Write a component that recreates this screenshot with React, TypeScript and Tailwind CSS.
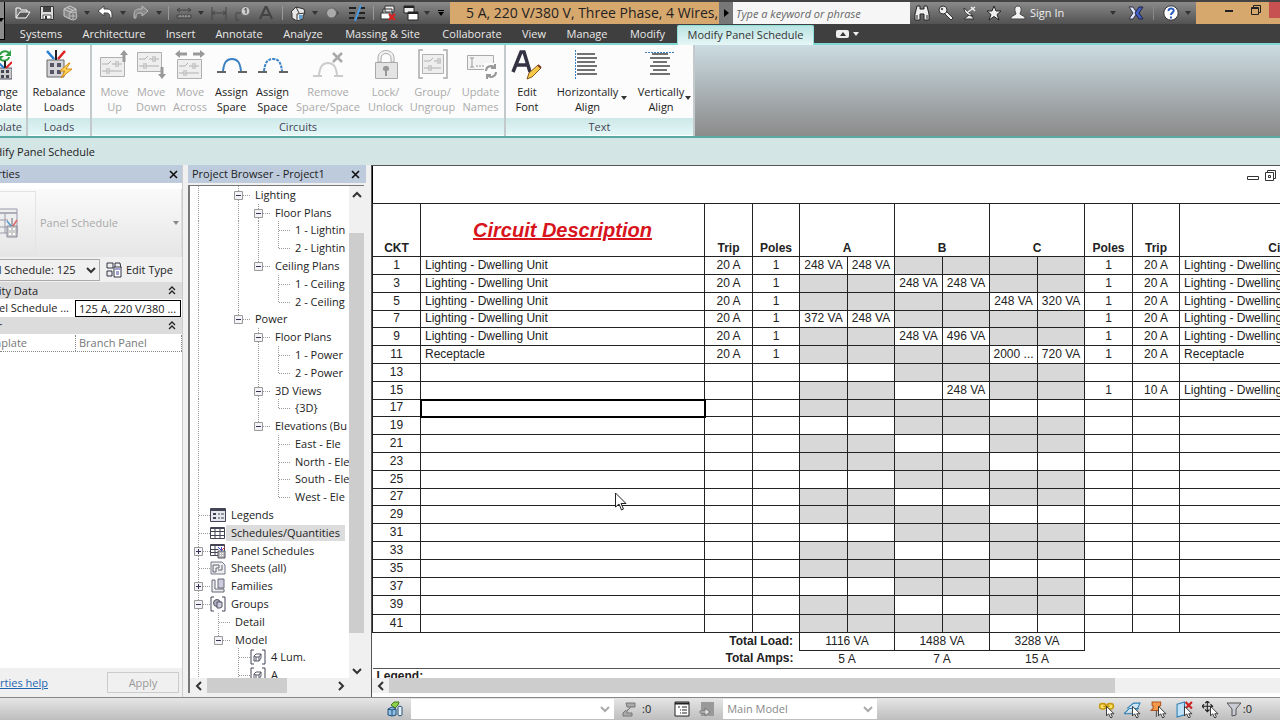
import React from 'react';
import clsx from 'clsx';

type IconProps = { name: string; size?: number };

const small: Record<string, React.ReactNode> = {
  open: (
    <>
      <path d="M1 13V3h4l1 2h6v2" fill="#777" stroke="#fff" />
      <path d="M1 13L5 7h10l-4 6z" fill="#555" stroke="#fff" />
    </>
  ),
  save: (
    <>
      <path d="M1.500 1.500h13v13h-13z" fill="#ddd" stroke="#333" />
      <path d="M4 2h8v5H4z" fill="#444" />
      <path d="M4 10h8v4H4z" fill="#fff" stroke="#555" />
      <path d="M6 11h2v3H6z" fill="#333" />
    </>
  ),
  cube: (
    <>
      <path d="M8 1l6 3v7l-6 3-6-3V4z" fill="#888" stroke="#ccc" />
      <path d="M2 4l6 3 6-3M8 7v7M5 2.500l6 3" fill="none" stroke="#ccc" />
      <circle cx="11" cy="11" r="4" fill="#777" stroke="#bbb" />
      <path d="M11 8v6M8 11h6" stroke="#bbb" />
    </>
  ),
  undo: <path d="M1 6l6-5v3h3c4 0 5 3 5 6v3h-2c0-4-1-5-4-5H7v3z" fill="#fff" stroke="#444" />,
  redo: <path d="M15 6L9 1v3H6C2 4 1 7 1 10v3h2c0-4 1-5 4-5h2v3z" fill="#888" stroke="#bbb" />,
  measure: (
    <>
      <path d="M1 5h14M4 3L1 5l3 2M12 3l3 2-3 2" fill="none" stroke="#444" />
      <path d="M1 10h14v3H1z" fill="#777" stroke="#444" />
      <path d="M4 10v2M7 10v2M10 10v2M13 10v2" stroke="#aaa" />
    </>
  ),
  dimension: <path d="M1 2v13M15 2v13M1 8h14M4 6L1 8l3 2M12 6l3 2-3 2" fill="none" stroke="#444" />,
  tag: (
    <>
      <path d="M1 15V8h5M1 15h3" fill="none" stroke="#444" />
      <circle cx="10.500" cy="6" r="4.500" fill="#ccc" stroke="#666" />
      <path d="M9.500 4.500L11 3.500v5" fill="none" stroke="#333" />
    </>
  ),
  textA: <path d="M2 14L7.500 2h1L14 14M4.500 10h7" fill="none" stroke="#444" strokeWidth="2.200" />,
  house: (
    <>
      <path d="M1 7l5-5 8 2 1 5-2 1v4l-6 2-5-3V8z" fill="#e8e8e8" stroke="#333" />
      <path d="M1 7l5-5 3 6M7 16V9l8-1" fill="none" stroke="#333" />
      <path d="M9 10h3v4H9z" fill="#5aa0d8" />
    </>
  ),
  section: (
    <>
      <path d="M10 3l5 5-5 5z" fill="#444" />
      <circle cx="7.500" cy="8" r="5" fill="#aaa" stroke="#666" />
    </>
  ),
  thin: (
    <>
      <path d="M0 3h7M10 3h6M0 8h6M9 8h7M0 13h5M8 13h8" stroke="#222" strokeWidth="2" />
      <path d="M12 0L6 16" stroke="#4c9be0" strokeWidth="2" />
    </>
  ),
  closeHidden: (
    <>
      <path d="M5 1h9v6H5zM3 4h9v6H3z" fill="#eee" stroke="#333" />
      <path d="M1 8h9v6H1z" fill="#fff" stroke="#333" />
      <path d="M9 9l6 6M15 9l-6 6" stroke="#d22" strokeWidth="2.200" />
    </>
  ),
  switchWin: (
    <>
      <path d="M1 1h10v7H1z" fill="#eee" stroke="#222" />
      <path d="M5 7h10v8H5z" fill="#fff" stroke="#222" />
      <path d="M5 8h10M1 2h10" stroke="#222" strokeWidth="2" />
    </>
  ),
  binoculars: (
    <path d="M3 1h3v3h4V1h3l2 8v6h-5V9H6v6H1V9zM3 10v4M13 10v4" fill="#eee" stroke="#222" />
  ),
  key: (
    <>
      <path d="M8 6l7 7-2 2-7-7z" fill="#f0f0f0" stroke="#333" />
      <circle cx="5" cy="5" r="4" fill="#f0f0f0" stroke="#333" />
      <circle cx="4" cy="4" r="1.200" fill="#555" />
    </>
  ),
  dish: (
    <>
      <path d="M2 3c0 5 4 8 9 8zM7 10l-5 4h10l-3-4" fill="#eee" stroke="#333" />
      <path d="M6 7l7-5M9 2l4 4" stroke="#eee" strokeWidth="1.400" />
    </>
  ),
  star: <path d="M8 1l2 5h5l-4 3.500 2 5.500-5-3.500L3 15l2-5.500L1 6h5z" fill="#eee" stroke="#222" />,
  user: (
    <path d="M8 1c3 0 3.500 3 3 5-.4 1.600-1 2-1 3l5 3v2H1v-2l5-3c0-1-.6-1.400-1-3-.5-2 0-5 3-5z" fill="#f2f2f2" stroke="#444" />
  ),
  exchange: (
    <>
      <path d="M1 2h4l4 6-4 6H1l4-6z" fill="#dfe6ff" stroke="#334" />
      <path d="M15 2h-4L7 8l4 6h4l-4-6z" fill="#3f5fc8" stroke="#224" />
    </>
  ),
  help: (
    <>
      <circle cx="8" cy="8" r="7.200" fill="#fff" stroke="#333" />
      <path d="M5.500 6c0-3.500 5.300-3.200 5.200-.2C10.600 7.800 8 7.600 8 10M8 11.500v2" fill="none" stroke="#2a5bb8" strokeWidth="2" />
    </>
  ),
  legend: (
    <>
      <path d="M.5 1.500h15v13H.5z" fill="#e6e8ef" stroke="#445" />
      <path d="M.5 3h15" stroke="#445" strokeWidth="2" />
      <path d="M3 6h3v2H3zM3 10h3v2H3z" fill="#445" />
      <path d="M8 7h2M11 7h3M8 11h2M11 11h3" stroke="#445" />
    </>
  ),
  grid: (
    <>
      <path d="M.5 2.500h14v11H.5z" fill="#fff" stroke="#445" />
      <path d="M.5 3.500h14M.5 6.500h14M.5 10.500h14M5 3v10M10 3v10" stroke="#445" />
    </>
  ),
  panelGrid: (
    <>
      <path d="M.5 1.500h14v11H.5z" fill="#fff" stroke="#445" />
      <path d="M.5 2.500h14M.5 6.500h8M.5 9.500h8M5 3v9" stroke="#445" />
      <path d="M8 8h7v7H8z" fill="#bbb" stroke="#556" />
      <path d="M11.500 8V4M11 7L8 4" stroke="#44c" />
      <path d="M12 7l3-3" stroke="#d33" />
      <path d="M10 10h1v1h-1zM12 10h1v1h-1zM10 12h1v1h-1zM12 12h1v1h-1z" fill="#fff" />
    </>
  ),
  sheet: (
    <>
      <path d="M1 2h11l3 3v9H1z" fill="#eee" stroke="#778" />
      <path d="M3 5h6v3H6v4H3zM8 10h4V5" fill="none" stroke="#667" />
    </>
  ),
  family: (
    <>
      <path d="M8 1h6v9H8z" fill="#ccd" stroke="#667" />
      <path d="M2 2h3v9h9v3H2z" fill="#eee" stroke="#667" />
    </>
  ),
  group: (
    <>
      <path d="M4 1H1v14h3M12 1h3v14h-3" fill="none" stroke="#445" />
      <circle cx="7" cy="7" r="3.500" fill="#aab" stroke="#556" />
      <path d="M7 6h5v5l-2 1H7z" fill="#ccd" stroke="#556" />
    </>
  ),
  model: (
    <>
      <path d="M4 1H1v14h3M12 1h3v14h-3" fill="none" stroke="#445" />
      <path d="M4 7l2-2h5v4l-2 3H6V8zM4 7v5h2M6 8h3v4M9 8l2-3" fill="none" stroke="#556" />
    </>
  ),
  typeEdit: (
    <>
      <path d="M1 1h6v5H1zM9 1h5l1 5H9zM1 9h5v5H1z" fill="#eee" stroke="#334" />
      <path d="M8 5h7v10H8z" fill="#fff" stroke="#334" />
      <path d="M9 7h5M10 10h3M10 12h3" stroke="#44a" />
    </>
  ),
  workset: (
    <>
      <path d="M4 4l3-3h5l-1 3-3 3z" fill="#8ed04a" stroke="#3c7a1c" />
      <path d="M1 8l4-2 4 2v6l-4 1-4-1z" fill="#8fc1e8" stroke="#24507a" />
      <path d="M1 8l4 1 4-1M5 9v6" fill="none" stroke="#24507a" />
      <path d="M11 6c0-1 4-1 4 0v8c0 1-4 1-4 0z" fill="#e8f0f8" stroke="#24507a" />
    </>
  ),
  editing: <path d="M4 2h9v4H5zM9 6l-4 4v2h5v3H1v-3l3-3" fill="#aaa" stroke="#777" />,
  options: (
    <>
      <path d="M1 1h14v14H1z" fill="#fff" stroke="#222" />
      <path d="M1 2.500h14" stroke="#222" strokeWidth="2" />
      <path d="M4 6h2M8 6h5M6 9h1M8 9h5M6 12h1M8 12h5" stroke="#222" />
    </>
  ),
  activate: (
    <>
      <path d="M2 1h13v14H2z" fill="#999" />
      <path d="M1 10h5V7l5 4-5 4v-3H1z" fill="#ddd" stroke="#777" />
    </>
  ),
  selLinks: (
    <path
      d="M4 2.500h1a2.500 2.500 0 010 5H4a2.500 2.500 0 010-5zM11 2.500h1a2.500 2.500 0 010 5h-1a2.500 2.500 0 010-5zM5 5h6"
      fill="#ffe36a"
      stroke="#c79a10"
      strokeWidth="1.500"
    />
  ),
  selUnder: <path d="M0 12h9M0 12l5-5h9M3 7l6-5h6l-4 9" fill="#cfe6f5" stroke="#2d7fb5" />,
  selPin: (
    <>
      <path d="M2 1h8v3L9 5v2l2 2H1l2-2V5L2 4z" fill="#f39a4a" stroke="#b3541a" />
      <path d="M6 9v6" stroke="#555" />
    </>
  ),
  selFace: (
    <>
      <path d="M1 3l7-2v12l-7 2z" fill="#bfe0f5" stroke="#2d7fb5" />
      <path d="M9 1l6 6M15 1L9 7" stroke="#c22" strokeWidth="2" />
    </>
  ),
  drag: <path d="M5 0v10M0 5h10M3 2l2-2 2 2M3 8l2 2 2-2M2 3L0 5l2 2M8 3l2 2-2 2" fill="none" stroke="#222" />,
  filter: <path d="M1 2h14L10 8v6l-4 1V8z" fill="#c9ccd2" stroke="#555" />,
};

const Icon: React.FC<IconProps> = ({ name, size = 16 }) => (
  <svg width={size} height={size} viewBox="0 0 16 16" className="shrink-0" aria-hidden="true">
    {small[name]}
    {(name.startsWith('sel') || name === 'drag') && (
      <path d="M8 5v9l2-2 2 4 1.500-1-1.500-3h3z" fill="#fff" stroke="#222" strokeWidth=".8" />
    )}
  </svg>
);

const Caret = ({ className = 'fill-[#333]' }: { className?: string }) => (
  <svg width="6" height="4" viewBox="0 0 6 4" className={clsx('shrink-0', className)} aria-hidden="true">
    <path d="M0 0h6L3 4z" />
  </svg>
);

type ChevronProps = { dir: 'up' | 'down' | 'left' | 'right'; className?: string };

const Chevron = ({ dir, className = 'stroke-[#333]' }: ChevronProps) => {
  const d = { up: 'M1 7l4-4 4 4', down: 'M1 3l4 4 4-4', left: 'M7 1L3 5l4 4', right: 'M3 1l4 4-4 4' }[dir];
  return (
    <svg
      width="10"
      height="10"
      viewBox="0 0 10 10"
      fill="none"
      strokeWidth="2"
      className={clsx('pointer-events-none shrink-0', className)}
      aria-hidden="true"
    >
      <path d={d} />
    </svg>
  );
};

const CloseX = () => (
  <svg width="9" height="9" viewBox="0 0 9 9" stroke="#111" strokeWidth="1.600" aria-hidden="true">
    <path d="M1 1l7 7M8 1L1 8" />
  </svg>
);

const quickAccess: [string, string][] = [
  ['open', 'w-6'],
  ['save', 'w-[23px]'],
  ['cube', 'w-6'],
  ['caret', 'w-2.5'],
  ['undo', 'w-[26px]'],
  ['caret', 'w-2.5'],
  ['redo', 'w-[26px]'],
  ['caret', 'w-2.5'],
  ['sep', 'w-2'],
  ['measure', 'w-6'],
  ['caret', 'w-2.5'],
  ['dimension', 'w-[26px]'],
  ['tag', 'w-[22px]'],
  ['textA', 'w-6'],
  ['sep', 'w-2'],
  ['house', 'w-6'],
  ['caret', 'w-2.5'],
  ['section', 'w-6'],
  ['thin', 'w-[26px]'],
  ['sep', 'w-1.5'],
  ['closeHidden', 'w-6'],
  ['switchWin', 'w-[22px]'],
  ['caret', 'w-2.5'],
];

const TitleBar = () => (
  <header className="flex h-6 shrink-0 items-stretch border-t-2 border-[#444] bg-linear-to-b from-[#8a8a8a] to-[#525252]">
    <button aria-label="Application menu" className="mr-1.5 flex w-[5px] items-end justify-end overflow-hidden border-r border-black bg-[#8c8c8c] pb-0.5">
      <Caret className="fill-black" />
    </button>
    {quickAccess.map(([name, width], i) =>
      name === 'sep' ? (
        <span key={i} className={clsx(width, 'flex shrink-0 justify-center py-1')}>
          <span className="w-px bg-[#999]" />
        </span>
      ) : (
        <button key={i} aria-label={name} className={clsx(width, 'flex shrink-0 items-center justify-center')}>
          {name === 'caret' ? <Caret /> : <Icon name={name} />}
        </button>
      )
    )}
    <button aria-label="Customize" className="flex w-[18px] shrink-0 flex-col items-center justify-center gap-px">
      <span className="h-px w-1.5 bg-black" />
      <Caret className="fill-black" />
    </button>
    <h1 className="w-[269px] shrink-0 bg-[#d7a86e] pl-4 text-sm leading-[22px] whitespace-nowrap text-[#222]">
      5 A, 220 V/380 V, Three Phase, 4 Wires,
    </h1>
    <button aria-label="Expand" className="flex w-3.5 shrink-0 items-center justify-center bg-[#777]">
      <svg width="5" height="8" viewBox="0 0 5 8" aria-hidden="true">
        <path d="M0 0l5 4-5 4z" />
      </svg>
    </button>
    <input
      aria-label="Search"
      placeholder="Type a keyword or phrase"
      className="w-[177px] shrink-0 bg-[#f6f6f6] px-[3px] pt-0.5 italic placeholder:text-[#666]"
    />
    <div className="flex shrink-0 items-center">
      {['binoculars', 'key', 'dish', 'star'].map((n) => (
        <button key={n} aria-label={n} className="flex w-6 justify-center">
          <Icon name={n} />
        </button>
      ))}
      <button className="flex items-center gap-1 pl-1 text-[#eee]">
        <Icon name="user" />
        Sign In
      </button>
    </div>
    <div className="flex min-w-0 flex-1 items-center justify-end">
      <button aria-label="Account menu" className="mr-2 p-1"><Caret /></button>
      <button aria-label="Exchange apps"><Icon name="exchange" /></button>
      <span className="mx-[9px] h-3.5 w-px bg-[#888]" />
      <button aria-label="Help"><Icon name="help" /></button>
      <button aria-label="Help menu" className="p-1.5 pr-[5px]"><Caret /></button>
    </div>
    <div className="flex w-[84px] shrink-0 items-start bg-[#d7a86e]">
      <button aria-label="Minimize" className="ml-5 flex h-[18px] w-[26px] items-center justify-center">
        <span className="h-0.5 w-2 bg-[#222]" />
      </button>
      <button aria-label="Restore" className="flex h-4 w-[27px] items-center justify-center">
        <svg width="10" height="10" viewBox="0 0 10 10" fill="none" stroke="#222" aria-hidden="true">
          <path d="M.5 2.500h7v7h-7zM2.500 2V.5h7v7H8M.5 3.500h7" />
        </svg>
      </button>
      <button aria-label="Close" className="h-4 flex-1 bg-[#c75050]" />
    </div>
  </header>
);

const tabs: [string, string][] = [
  ['Systems', 'w-[62px]'],
  ['Architecture', 'w-[84px]'],
  ['Insert', 'w-[49px]'],
  ['Annotate', 'w-[68px]'],
  ['Analyze', 'w-[60px]'],
  ['Massing & Site', 'w-[99px]'],
  ['Collaborate', 'w-[80px]'],
  ['View', 'w-[44px]'],
  ['Manage', 'w-[62px]'],
  ['Modify', 'w-[59px]'],
];

const RibbonTabs = () => (
  <nav className="flex h-[21px] shrink-0 items-end border-b-2 border-[#7fd6d3] bg-[#3f3f3f] whitespace-nowrap">
    <span className="mr-[5px] h-4 w-[5px] shrink-0 self-start border-r border-b border-black bg-[#8c8c8c]" />
    {tabs.map(([label, width]) => (
      <button key={label} className={clsx(width, 'h-[19px] shrink-0 text-[#e8e8e8]')}>
        {label}
      </button>
    ))}
    <button className="-mb-0.5 h-5 w-[137px] shrink-0 rounded-t-xs border-x border-t border-[#8fe0dc] bg-linear-to-b from-[#b9e4e2] to-[#e6f6f6] pb-0.5 text-[#333]">
      Modify Panel Schedule
    </button>
    <button aria-label="Minimize ribbon" className="ml-[22px] flex h-[19px] items-center gap-1">
      <span className="flex h-2 w-[13px] items-center justify-center rounded-xs bg-[#eee]">
        <Caret className="rotate-180 fill-[#333]" />
      </span>
      <Caret className="fill-[#eee]" />
    </button>
  </nav>
);

const Circuitry = ({ x = 0, y = 0, w = 25 }: { x?: number; y?: number; w?: number }) => (
  <g transform={`translate(${x} ${y})`} fill="#eee" stroke="#b0b0b0">
    <path d={`M.5.5h${w}v19h-${w}z`} />
    <path d={`M2 7h6l3-3M12 7h4M16 4v6M18 4v6M18 7h${w - 20}M2 14h5M7 11v6M9 11v6M9 14h${w - 11}`} fill="none" />
  </g>
);

const arrowUp = 'M4 0l4 5H5.500v7h-3V5H0z';

const big: Record<string, React.ReactNode> = {
  rebalance: (
    <>
      <path d="M4 11h17v17H4z" fill="#d4d4d8" stroke="#666" />
      <path d="M7 14h4v4H7zM14 14h4v4h-4zM7 21h4v4H7zM14 21h4v4h-4z" fill="#556" />
      <path d="M4 2l7 8" stroke="#2a7fd0" strokeWidth="2.500" />
      <path d="M13 1v10" stroke="#222" strokeWidth="2" />
      <path d="M22 2l-7 8" stroke="#d22" strokeWidth="2.500" />
      <path d="M26 14l-9 8h5l-4 7 11-9h-6l4-6z" fill="#ffd75a" stroke="#d88a10" />
    </>
  ),
  change: (
    <>
      <path d="M10 6a5 4 0 019-2M19 8a5 4 0 01-9 2" fill="none" stroke="#2f9e44" strokeWidth="2" />
      <path d="M21 1v6h-6zM8 13V7h6z" fill="#2f9e44" />
      <path d="M8 19h14v11H8z" fill="#ccc" stroke="#556" />
      <path d="M11 21h3v3h-3zM16 21h3v3h-3zM11 26h3v3h-3zM16 26h3v3h-3z" fill="#445" />
      <path d="M8 13l6 6" stroke="#2a7fd0" strokeWidth="2" />
      <path d="M15 12v7" stroke="#222" strokeWidth="2" />
      <path d="M22 13l-6 6" stroke="#d22" strokeWidth="2" />
    </>
  ),
  moveUp: (
    <>
      <Circuitry x={1} y={8} w={24} />
      <path d={arrowUp} transform="translate(21 1)" fill="#999" />
    </>
  ),
  moveDown: (
    <>
      <Circuitry x={2} y={3} w={24} />
      <path d={arrowUp} transform="translate(31 30) rotate(180)" fill="#999" />
    </>
  ),
  moveAcross: (
    <>
      <Circuitry x={3} y={10} w={24} />
      <path d={arrowUp} transform="translate(1 9) rotate(-90)" fill="#999" />
      <path d={arrowUp} transform="translate(31 1) rotate(90)" fill="#999" />
    </>
  ),
  spare: (
    <>
      <path d="M1 23h9M22 23h9" stroke="#333" strokeWidth="1.500" />
      <path d="M7 22c1-8 3-12 9-12s8 4 9 12" fill="none" stroke="#3b82c4" strokeWidth="2" />
    </>
  ),
  space: (
    <>
      <path d="M1 23h9M22 23h9" stroke="#333" strokeWidth="1.500" />
      <path d="M7 22c1-8 3-12 9-12s8 4 9 12" fill="none" stroke="#3b82c4" strokeWidth="2" strokeDasharray="3 1" />
    </>
  ),
  remove: (
    <>
      <path d="M1 27h9M22 27h9" stroke="#bbb" strokeWidth="1.500" />
      <path d="M7 26c1-8 3-12 9-12s8 4 9 12" fill="none" stroke="#ccc" strokeWidth="2" />
      <path d="M21 4l9 9M30 4l-9 9" stroke="#aaa" strokeWidth="2.500" />
    </>
  ),
  lock: (
    <>
      <path d="M8 13V9c0-10 16-10 16 0v4h-3V9c0-6-10-6-10 0v4z" fill="#f2f2f2" stroke="#aaa" />
      <path d="M5.500 13.500h22v16h-22z" fill="#e4e4e4" stroke="#aaa" />
      <path d="M16 17a2.500 2.500 0 011 5v5h-2v-5a2.500 2.500 0 011-5z" fill="#999" />
    </>
  ),
  group: (
    <>
      <path d="M6 1H2v28h4M26 1h4v28h-4" fill="none" stroke="#aaa" strokeWidth="1.500" />
      <Circuitry x={5} y={5} w={21} />
    </>
  ),
  update: (
    <>
      <path d="M2.500 6.500h26v14h-26z" fill="#f4f4f4" stroke="#aaa" />
      <path d="M5 9h4M7 9v9M5 18h4M11 17h2M14 17h2M17 17h2" stroke="#999" />
      <path d="M19 14h13v15H19z" fill="#fcfcfc" />
      <path d="M21 22a5 5 0 019-3M31 23a5 5 0 01-9 3M30 15v4h-4M22 30v-4h4" fill="none" stroke="#999" strokeWidth="2" />
    </>
  ),
  font: (
    <>
      <path d="M2 23L10 3h3l6 20M5 16h11" fill="none" stroke="#334" strokeWidth="3.500" />
      <path d="M16 30l2-6 9-8 3 3-9 9z" fill="#f7c948" stroke="#8a5a20" />
      <path d="M27 16l3 3" stroke="#7a3b20" strokeWidth="2" />
    </>
  ),
  horizontal: (
    <>
      <path d="M3.500 1v29" stroke="#3b82c4" strokeDasharray="2 1" />
      <path d="M5 5h18M5 9h20M5 13h18M5 17h20M5 21h18M5 25h20" stroke="#444" strokeWidth="1.500" />
    </>
  ),
  vertical: (
    <>
      <path d="M0 3.500h30" stroke="#3b82c4" strokeDasharray="2 1" />
      <path d="M7 5h16M5 9h20M8 13h14M5 17h20M8 21h14M5 25h20" stroke="#444" strokeWidth="1.500" />
    </>
  ),
};

type RibbonButtonProps = { icon: string; lines: [string, string]; width: string; disabled?: boolean; menu?: boolean };

const RibbonButton: React.FC<RibbonButtonProps> = ({ icon, lines, width, disabled, menu }) => (
  <button
    disabled={disabled}
    className={clsx(width, 'relative flex shrink-0 flex-col items-center pt-1 whitespace-nowrap', disabled ? 'text-[#aaa]' : 'text-[#222]')}
  >
    <svg width="32" height="32" viewBox="0 0 32 32" fill="none" className="mb-[3px] shrink-0" aria-hidden="true">
      {big[icon]}
    </svg>
    <span>{lines[0]}</span>
    <span>{lines[1]}</span>
    {menu && (
      <span className="absolute right-0.5 bottom-[18px]">
        <Caret />
      </span>
    )}
  </button>
);

const RibbonPanel = ({ title, className, children }: { title: string; className?: string; children: React.ReactNode }) => (
  <section className={clsx('flex shrink-0 flex-col border-r-2 border-[#c4c9cc] bg-[#fcfcfc]', className)}>
    <div className="flex flex-1 leading-[15px]">{children}</div>
    <h2 className="h-[18px] border-b border-white bg-linear-to-b from-[#cde8e8] to-[#e4f7f7] text-center leading-[17px] text-[#445]">
      {title}
    </h2>
  </section>
);

const Ribbon = () => (
  <div className="flex h-[93px] shrink-0 border-b-2 border-[#5aa9a2] bg-linear-to-b from-[#cbdce2] to-[#8b8b8b]">
    <section className="flex w-7 shrink-0 flex-col items-end overflow-hidden border-r-2 border-[#c4c9cc] bg-[#fcfcfc]">
      <div className="flex flex-1 justify-end leading-[15px]">
        <button className="flex flex-col items-end pt-1 pr-1 text-[#222]">
          <svg width="24" height="32" viewBox="-2 0 24 32" fill="none" className="mr-2.5 mb-[3px] shrink-0" aria-hidden="true">
            {big.change}
          </svg>
          <span className="mr-1">Change</span>
          <span>Template</span>
        </button>
      </div>
      <h2 className="h-[18px] bg-[#dcf0f0] pr-1 leading-[17px] text-[#445]">Template</h2>
    </section>
    <RibbonPanel title="Loads" className="w-16">
      <RibbonButton icon="rebalance" lines={['Rebalance', 'Loads']} width="w-full" />
    </RibbonPanel>
    <RibbonPanel title="Circuits" className="w-[414px] [&>div]:pl-[5px]">
      <RibbonButton icon="moveUp" lines={['Move', 'Up']} width="w-[35px]" disabled />
      <RibbonButton icon="moveDown" lines={['Move', 'Down']} width="w-[38px]" disabled />
      <RibbonButton icon="moveAcross" lines={['Move', 'Across']} width="w-10" disabled />
      <RibbonButton icon="spare" lines={['Assign', 'Spare']} width="w-[43px]" />
      <RibbonButton icon="space" lines={['Assign', 'Space']} width="w-[39px]" />
      <RibbonButton icon="remove" lines={['Remove', 'Spare/Space']} width="w-[72px]" disabled />
      <RibbonButton icon="lock" lines={['Lock/', 'Unlock']} width="w-[43px]" disabled />
      <RibbonButton icon="group" lines={['Group/', 'Ungroup']} width="w-[51px]" disabled />
      <RibbonButton icon="update" lines={['Update', 'Names']} width="w-[45px]" disabled />
    </RibbonPanel>
    <RibbonPanel title="Text" className="w-[189px] [&>div]:pl-0.5">
      <RibbonButton icon="font" lines={['Edit', 'Font']} width="w-[38px]" />
      <RibbonButton icon="horizontal" lines={['Horizontally', 'Align']} width="w-[83px]" menu />
      <RibbonButton icon="vertical" lines={['Vertically', 'Align']} width="w-16" menu />
    </RibbonPanel>
  </div>
);

const DoubleUp = () => (
  <svg width="8" height="9" viewBox="0 0 8 9" fill="none" stroke="#222" strokeWidth="1.300" aria-hidden="true">
    <path d="M1 4l3-3 3 3M1 8l3-3 3 3" />
  </svg>
);

const PaneHeader = ({ children, className }: { children: React.ReactNode; className?: string }) => (
  <div className={clsx('flex h-[18px] shrink-0 items-center bg-[#bdcbdc]', className)}>
    {children}
    <button aria-label="Close" className="ml-auto p-0.5">
      <CloseX />
    </button>
  </div>
);

const Properties = () => (
  <aside className="flex w-[183px] shrink-0 flex-col overflow-hidden border-r border-[#ccc] bg-white">
    <PaneHeader className="pr-0.5">
      <h2 className="flex w-5 justify-end">Properties</h2>
    </PaneHeader>
    <div className="mt-1.5 flex h-[68px] shrink-0 items-center border-r border-[#ddd] bg-linear-to-b from-[#fafafa] to-[#e6e6e6]">
      <div className="flex h-16 w-9 items-center border border-l-0 border-[#e4e4e4]">
        <svg width="18" height="30" viewBox="0 0 18 30" aria-hidden="true">
          <path d="M-4 1h21v4H-4zM-4 5h21v20H-4zM5 5v20M-4 12h12M-4 19h12" fill="#eee" stroke="#99a" />
          <path d="M7 18h10v11H7z" fill="#ccc" stroke="#889" />
          <path d="M9 20h2v2H9zM13 20h2v2h-2zM9 25h2v2H9zM13 25h2v2h-2z" fill="#fff" />
          <path d="M7 13l4 5" stroke="#59c" strokeWidth="1.500" />
          <path d="M12 10v8" stroke="#667" />
          <path d="M17 12l-4 6" stroke="#d66" strokeWidth="1.500" />
        </svg>
      </div>
      <span className="pl-1 text-[#aaa]">Panel Schedule</span>
      <span className="mr-0.5 ml-auto">
        <Caret className="fill-[#888]" />
      </span>
    </div>
    <div className="flex h-[25px] shrink-0 items-center bg-[#f0f0f0]">
      <div className="flex h-[22px] w-[100px] items-center justify-end gap-2.5 overflow-hidden border border-l-0 border-[#aaa] pr-[3px]">
        <select aria-label="Instance" className="shrink-0 appearance-none bg-transparent">
          <option>Panel Schedule: 125</option>
        </select>
        <Chevron dir="down" />
      </div>
      <button className="ml-1.5 flex items-center gap-1">
        <Icon name="typeEdit" />
        Edit Type
      </button>
    </div>
    <div className="flex h-[17px] shrink-0 items-center bg-[#dcdcdc] pr-1.5">
      <h3 className="flex w-[38px] justify-end whitespace-nowrap">Identity Data</h3>
      <button aria-label="Collapse identity data" className="ml-auto"><DoubleUp /></button>
    </div>
    <div className="flex h-[18px] shrink-0 items-center">
      <label htmlFor="schedule-name" className="flex w-[75px] justify-end pr-1.5 whitespace-nowrap">Panel Schedule ...</label>
      <input id="schedule-name" defaultValue="125 A, 220 V/380 ..." className="h-[17px] w-[106px] border border-black px-[3px]" />
    </div>
    <div className="flex h-[17px] shrink-0 items-center bg-[#dcdcdc] pr-1.5">
      <h3 className="flex w-0.5 justify-end">Other</h3>
      <button aria-label="Collapse other" className="ml-auto"><DoubleUp /></button>
    </div>
    <div className="flex h-[18px] shrink-0 items-center border-b border-dotted border-[#888] text-[#777]">
      <span className="flex w-[27px] justify-end">Template</span>
      <span className="ml-12 flex-1 border-x border-dotted border-[#888] pl-[3px]">Branch Panel</span>
    </div>
    <div className="flex-1" />
    <div className="flex h-[29px] shrink-0 items-center bg-[#f0f0f0] pr-[3px]">
      <a href="#help" className="flex w-12 justify-end whitespace-nowrap text-[#1f66b0] underline">Properties help</a>
      <button disabled className="ml-auto h-[21px] w-[72px] border border-[#ccc] text-[#999]">Apply</button>
    </div>
  </aside>
);

// One character per indent cell: "|" line, "t" tee, "l" last child, "-" / "+" toggle, "y" toggle ending a branch
type TreeRow = { guide: string; label: string; icon?: string; selected?: boolean };

const tree: TreeRow[] = [
  { guide: '| -', label: 'Lighting' },
  { guide: '| |-', label: 'Floor Plans' },
  { guide: '| ||t', label: '1 - Lightin' },
  { guide: '| ||l', label: '2 - Lightin' },
  { guide: '| |y', label: 'Ceiling Plans' },
  { guide: '| | t', label: '1 - Ceiling' },
  { guide: '| | l', label: '2 - Ceiling' },
  { guide: '| y', label: 'Power' },
  { guide: '|  -', label: 'Floor Plans' },
  { guide: '|  |t', label: '1 - Power' },
  { guide: '|  |l', label: '2 - Power' },
  { guide: '|  -', label: '3D Views' },
  { guide: '|  |l', label: '{3D}' },
  { guide: '|  y', label: 'Elevations (Bu' },
  { guide: '|   t', label: 'East - Ele' },
  { guide: '|   t', label: 'North - Ele' },
  { guide: '|   t', label: 'South - Ele' },
  { guide: '|   l', label: 'West - Ele' },
  { guide: 't', label: 'Legends', icon: 'legend' },
  { guide: 't', label: 'Schedules/Quantities', icon: 'grid', selected: true },
  { guide: '+', label: 'Panel Schedules', icon: 'panelGrid' },
  { guide: 't', label: 'Sheets (all)', icon: 'sheet' },
  { guide: '+', label: 'Families', icon: 'family' },
  { guide: '-', label: 'Groups', icon: 'group' },
  { guide: '|t', label: 'Detail' },
  { guide: '|y', label: 'Model' },
  { guide: '| t', label: '4 Lum.', icon: 'model' },
  { guide: '| t', label: 'A', icon: 'model' },
];

const guideLines: Record<string, string> = {
  '|': 'M8.500 0v18',
  t: 'M8.500 0v18M9 9.500h11',
  l: 'M8.500 0v9M9 9.500h11',
  '-': 'M8.500 0v5M8.500 14v4M13 9.500h7',
  '+': 'M8.500 0v5M8.500 14v4M13 9.500h7',
  y: 'M8.500 0v5M13 9.500h7',
};

const Guide = ({ kind, label }: { kind: string; label: string }) => {
  const toggle = '-+y'.includes(kind);
  const drawing = (
    <svg viewBox="0 0 20 18" className="h-[18px] w-5" fill="none" stroke="#999" aria-hidden="true">
      <path d={guideLines[kind]} strokeDasharray="1 1" />
      {toggle && (
        <>
          <path d="M4.500 5.500h8v8h-8z" fill="#f4f4f8" />
          <path d={kind === '+' ? 'M6 9.500h5M8.500 7v5' : 'M6 9.500h5'} stroke="#335" />
        </>
      )}
    </svg>
  );
  return toggle ? (
    <button aria-label={`Toggle ${label}`} className="shrink-0">{drawing}</button>
  ) : (
    <span className="shrink-0">{drawing}</span>
  );
};

const ProjectBrowser = () => (
  <aside className="mx-[5px] flex w-[178px] shrink-0 flex-col overflow-hidden">
    <PaneHeader className="pr-1 pl-1">
      <h2>Project Browser - Project1</h2>
    </PaneHeader>
    <div className="mt-0.5 mr-0.5 flex min-h-0 flex-1 border-t border-l-2 border-[#777] bg-white">
      <div className="flex min-w-0 flex-1 flex-col">
        <div className="min-h-0 flex-1 overflow-hidden">
          <ul className="grid h-[498px] auto-rows-fr">
            {tree.map((row, i) => (
              <li key={i} className="flex min-h-0 items-center whitespace-nowrap">
                {row.guide.split('').map((c, j) =>
                  c === ' ' ? <span key={j} className="w-5 shrink-0" /> : <Guide key={j} kind={c} label={row.label} />
                )}
                {row.icon && <Icon name={row.icon} />}
                <span className={clsx('px-[5px]', row.selected && 'bg-[#dcdcdc]')}>{row.label}</span>
              </li>
            ))}
          </ul>
        </div>
        <div className="flex h-[15px] shrink-0 bg-[#f0f0f0]">
          <button aria-label="Scroll left" className="flex w-[17px] items-center justify-center"><Chevron dir="left" /></button>
          <span className="w-20 bg-[#cdcdcd]" />
          <button aria-label="Scroll right" className="ml-auto flex w-[17px] items-center justify-center"><Chevron dir="right" /></button>
        </div>
      </div>
      <div className="flex w-[15px] shrink-0 flex-col bg-[#f0f0f0] pb-[15px]">
        <button aria-label="Scroll up" className="flex h-[47px] justify-center pt-1"><Chevron dir="up" /></button>
        <span className="flex-1 bg-[#cdcdcd]" />
        <button aria-label="Scroll down" className="flex h-[45px] items-end justify-center pb-0.5"><Chevron dir="down" /></button>
      </div>
    </div>
    <div className="h-1" />
  </aside>
);

type Circuit = { name?: string; trip?: string; loads?: [string, string]; right?: string; rightTrip?: string };

const circuits: Circuit[] = [
  { name: 'Lighting - Dwelling Unit', trip: '20 A', loads: ['248 VA', '248 VA'], right: 'Lighting - Dwelling Unit', rightTrip: '20 A' },
  { name: 'Lighting - Dwelling Unit', trip: '20 A', loads: ['248 VA', '248 VA'], right: 'Lighting - Dwelling Unit', rightTrip: '20 A' },
  { name: 'Lighting - Dwelling Unit', trip: '20 A', loads: ['248 VA', '320 VA'], right: 'Lighting - Dwelling Unit', rightTrip: '20 A' },
  { name: 'Lighting - Dwelling Unit', trip: '20 A', loads: ['372 VA', '248 VA'], right: 'Lighting - Dwelling Unit', rightTrip: '20 A' },
  { name: 'Lighting - Dwelling Unit', trip: '20 A', loads: ['248 VA', '496 VA'], right: 'Lighting - Dwelling Unit', rightTrip: '20 A' },
  { name: 'Receptacle', trip: '20 A', loads: ['2000 ...', '720 VA'], right: 'Receptacle', rightTrip: '20 A' },
  {},
  { loads: ['', '248 VA'], right: 'Lighting - Dwelling Unit', rightTrip: '10 A' },
  ...Array.from({ length: 13 }, () => ({})),
];

const SELECTED_ROW = 8;

const headCell = 'border border-[#222] p-0 pb-px text-center whitespace-nowrap';
const cell = 'border border-[#222] p-0 pb-0.5 text-center whitespace-nowrap';
const nameCell = 'border border-[#222] p-0 pb-0.5 pl-1 text-left whitespace-nowrap';

const rowHeight = (i: number) => {
  if (i === 19) return 'h-[19px]';
  return i === 3 || i === 8 || i === 13 ? 'h-[17px]' : 'h-[18px]';
};

const ScheduleTable = () => (
  <table className="w-[1092px] table-fixed border-collapse text-xs leading-[14px] text-[#222]">
    <colgroup>
      <col className="w-12" />
      <col className="w-[284px]" />
      <col className="w-12" />
      <col className="w-[47px]" />
      <col className="w-12" />
      <col className="w-[47px]" />
      <col className="w-12" />
      <col className="w-[47px]" />
      <col className="w-12" />
      <col className="w-[47px]" />
      <col className="w-12" />
      <col className="w-[47px]" />
      <col className="w-[285px]" />
    </colgroup>
    <thead>
      <tr className="h-[53px] align-bottom">
        <th className={headCell}>CKT</th>
        <th className={clsx(headCell, 'align-middle text-xl leading-6 text-[#d8141c] italic underline')}>Circuit Description</th>
        <th className={headCell}>Trip</th>
        <th className={headCell}>Poles</th>
        <th colSpan={2} className={headCell}>A</th>
        <th colSpan={2} className={headCell}>B</th>
        <th colSpan={2} className={headCell}>C</th>
        <th className={headCell}>Poles</th>
        <th className={headCell}>Trip</th>
        <th className={headCell}>Circuit Description</th>
      </tr>
    </thead>
    <tbody>
      {circuits.map((c, i) => (
        <tr key={i} className={rowHeight(i)}>
          <td className={cell}>{i * 2 + 1}</td>
          <td className={clsx(nameCell, i === SELECTED_ROW && 'outline-2 -outline-offset-1 outline-black')}>{c.name}</td>
          <td className={cell}>{c.trip}</td>
          <td className={cell}>{c.trip && '1'}</td>
          {[0, 1, 2].map((phase) =>
            [0, 1].map((side) => (
              <td key={`${phase}-${side}`} className={clsx(cell, phase !== i % 3 && 'bg-[#d8d8d8]')}>
                {phase === i % 3 && c.loads?.[side]}
              </td>
            ))
          )}
          <td className={cell}>{c.rightTrip && '1'}</td>
          <td className={cell}>{c.rightTrip}</td>
          <td className={nameCell}>{c.right}</td>
        </tr>
      ))}
    </tbody>
    <tfoot>
      <tr className="h-[18px]">
        <th colSpan={4} className="p-0 pr-1.5 pb-0.5 text-right">Total Load:</th>
        <td colSpan={2} className={cell}>1116 VA</td>
        <td colSpan={2} className={cell}>1488 VA</td>
        <td colSpan={2} className={cell}>3288 VA</td>
        <td colSpan={3} />
      </tr>
      <tr className="h-[18px] border-b border-[#555]">
        <th colSpan={4} className="p-0 pr-1.5 pb-0.5 text-right">Total Amps:</th>
        <td colSpan={2} className="p-0 pb-0.5 text-center">5 A</td>
        <td colSpan={2} className="p-0 pb-0.5 text-center">7 A</td>
        <td colSpan={2} className="p-0 pb-0.5 text-center">15 A</td>
        <td colSpan={3} />
      </tr>
      <tr>
        <th colSpan={13} className="p-0 pl-1 text-left">Legend:</th>
      </tr>
    </tfoot>
  </table>
);

const Sheet = () => (
  <main className="relative flex min-w-0 flex-1 flex-col border-t border-l border-[#555] bg-white">
    <div className="flex min-h-0 flex-1 flex-col overflow-hidden font-['Liberation_Sans',Arial,sans-serif]">
      <div className="flex h-[37px] shrink-0 items-start justify-end gap-1.5 border-l border-black pt-1 pr-1">
        <button aria-label="Minimize view" className="pt-1.5">
          <svg width="12" height="5" viewBox="0 0 12 5" fill="#fff" stroke="#333" aria-hidden="true"><path d="M.5.5h11v3H.5z" /></svg>
        </button>
        <button aria-label="Restore view">
          <svg width="11" height="11" viewBox="0 0 11 11" fill="none" stroke="#333" aria-hidden="true">
            <path d="M.5 2.500h8v8h-8zM2.500 2V.5h8v8H9M3.500 5.500h2v2h-2z" />
          </svg>
        </button>
      </div>
      <ScheduleTable />
    </div>
    <div className="mb-1 flex h-[15px] shrink-0 bg-[#f0f0f0]">
      <button aria-label="Scroll left" className="flex w-[17px] items-center justify-center"><Chevron dir="left" /></button>
      <span className="w-4/5 bg-[#cdcdcd]" />
    </div>
    <svg width="12" height="19" viewBox="0 0 12 19" className="absolute top-[326px] left-[243px]" aria-hidden="true">
      <path d="M.5 1v14l3.500-3 2.500 6 2-1L6 11.500h5z" fill="#fff" stroke="#222" />
    </svg>
  </main>
);

const StatusSelect = ({ label, value, className }: { label: string; value: string; className: string }) => (
  <div className={clsx('ml-2 flex h-5 shrink-0 items-center bg-white pr-1', className)}>
    <select aria-label={label} className="h-full flex-1 appearance-none bg-transparent pl-1 text-[#888]">
      <option>{value}</option>
    </select>
    <Chevron dir="down" className="stroke-[#aaa]" />
  </div>
);

const StatusBar = () => (
  <footer className="flex h-[23px] shrink-0 items-center border-t border-[#888] bg-linear-to-b from-[#e6e6e6] to-[#bebebe] pr-7 pl-[387px]">
    <button aria-label="Worksets"><Icon name="workset" /></button>
    <StatusSelect label="Active workset" value="" className="w-[203px]" />
    <button className="ml-2 flex items-center gap-1">
      <Icon name="editing" />
      :0
    </button>
    <button aria-label="Design options" className="ml-[23px]"><Icon name="options" /></button>
    <button aria-label="Add to set" className="ml-[9px]"><Icon name="activate" /></button>
    <StatusSelect label="Design option" value="Main Model" className="w-[154px]" />
    <div className="ml-auto flex items-center gap-[9px]">
      {['selLinks', 'selUnder', 'selPin', 'selFace', 'drag'].map((n) => (
        <button key={n} aria-label={n}><Icon name={n} size={17} /></button>
      ))}
      <button className="-ml-0.5 flex items-center gap-px">
        <Icon name="filter" />
        :0
      </button>
    </div>
  </footer>
);

const App: React.FC = () => (
  <div className="flex h-screen flex-col overflow-hidden bg-[#f0f0f0] font-['Open_Sans','Noto_Sans',sans-serif] text-[11px] leading-4 text-[#222]">
    <TitleBar />
    <RibbonTabs />
    <Ribbon />
    <div className="flex h-[27px] shrink-0 items-center bg-[#d4e5e5]">
      <span className="flex w-[95px] justify-end whitespace-nowrap">Modify Panel Schedule</span>
    </div>
    <div className="flex min-h-0 flex-1">
      <Properties />
      <ProjectBrowser />
      <Sheet />
    </div>
    <StatusBar />
  </div>
);

export default App;
